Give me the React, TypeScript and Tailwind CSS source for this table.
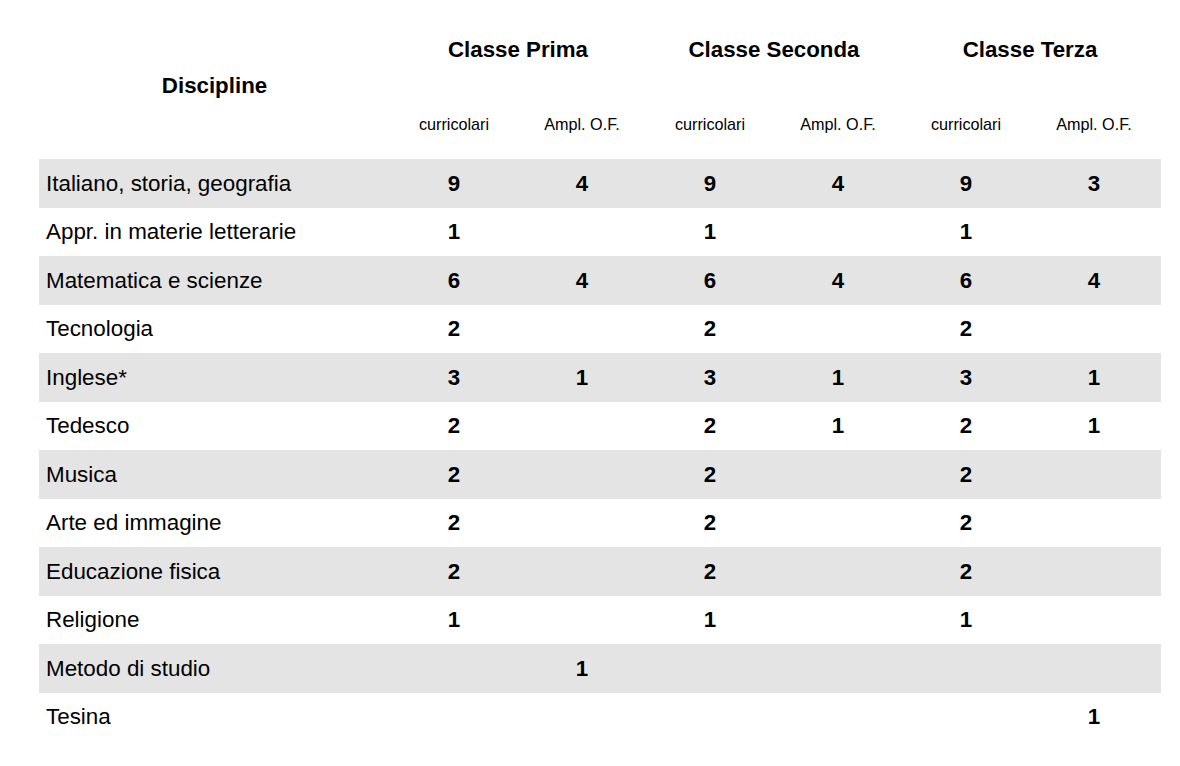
import React from "react";

type Row = { name: string; values: (number | null)[] };

const rows: Row[] = [
  { name: "Italiano, storia, geografia", values: [9, 4, 9, 4, 9, 3] },
  { name: "Appr. in materie letterarie", values: [1, null, 1, null, 1, null] },
  { name: "Matematica e scienze", values: [6, 4, 6, 4, 6, 4] },
  { name: "Tecnologia", values: [2, null, 2, null, 2, null] },
  { name: "Inglese*", values: [3, 1, 3, 1, 3, 1] },
  { name: "Tedesco", values: [2, null, 2, 1, 2, 1] },
  { name: "Musica", values: [2, null, 2, null, 2, null] },
  { name: "Arte ed immagine", values: [2, null, 2, null, 2, null] },
  { name: "Educazione fisica", values: [2, null, 2, null, 2, null] },
  { name: "Religione", values: [1, null, 1, null, 1, null] },
  { name: "Metodo di studio", values: [null, 1, null, null, null, null] },
  { name: "Tesina", values: [null, null, null, null, null, 1] },
];

const classes = ["Classe Prima", "Classe Seconda", "Classe Terza"];

const grid = "grid grid-cols-[351px_repeat(6,128px)]";

export default function App() {
  return (
    <div
      className="w-[1180px] h-[766px] bg-white text-black pl-[39px] pt-[11px]"
      style={{ fontFamily: '"Liberation Sans", Arial, sans-serif' }}
    >
      <div className="w-[1122px]">
        {/* header */}
        <div className={`${grid} grid-rows-[78px_70px]`}>
          <div className="row-span-2 flex items-center justify-center pt-[2px] text-[22.3px] font-bold">
            Discipline
          </div>
          {classes.map((c) => (
            <div
              key={c}
              className="col-span-2 flex items-center justify-center text-[22.3px] font-bold"
            >
              {c}
            </div>
          ))}
          {classes.map((c) => (
            <React.Fragment key={c + "-sub"}>
              <div className="flex items-center justify-center text-[16.2px]">curricolari</div>
              <div className="flex items-center justify-center text-[16.2px]">Ampl. O.F.</div>
            </React.Fragment>
          ))}
        </div>

        {/* body */}
        {rows.map((r, i) => (
          <div
            key={r.name}
            className={`${grid} ${i % 2 === 0 ? "h-[49px] bg-[#e4e4e4]" : "h-[48px]"}`}
          >
            <div className="flex items-center pl-[7px] text-[22.4px]">{r.name}</div>
            {r.values.map((v, j) => (
              <div key={j} className="flex items-center justify-center text-[22.3px] font-bold">
                {v ?? ""}
              </div>
            ))}
          </div>
        ))}
      </div>
    </div>
  );
}
